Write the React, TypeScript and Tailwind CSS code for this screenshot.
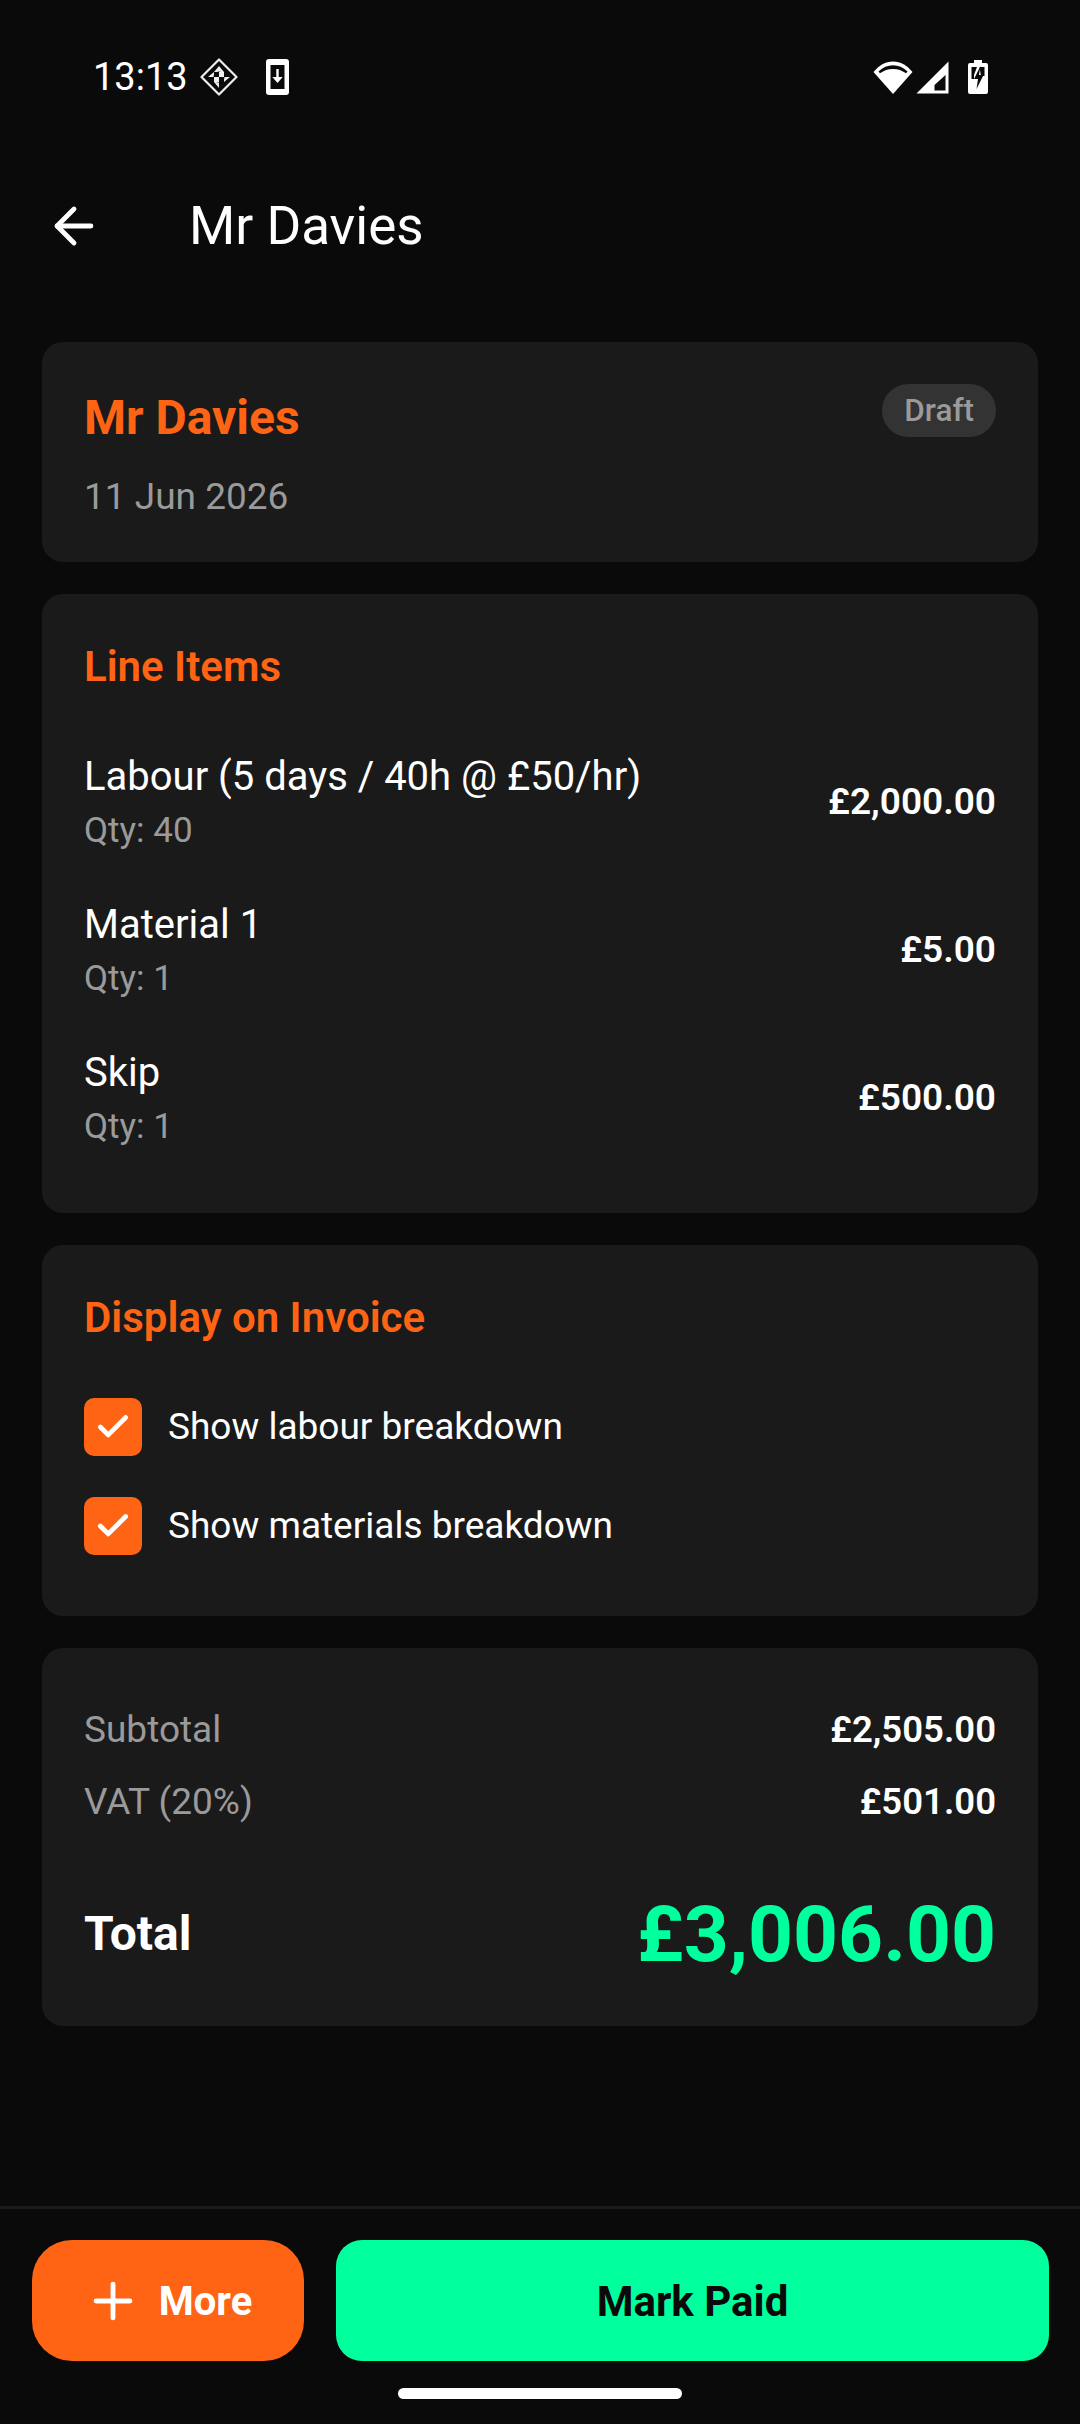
import { ArrowLeft, Check, Plus } from 'lucide-react';

const items = [
  { name: 'Labour (5 days / 40h @ £50/hr)', qty: 'Qty: 40', price: '£2,000.00' },
  { name: 'Material 1', qty: 'Qty: 1', price: '£5.00' },
  { name: 'Skip', qty: 'Qty: 1', price: '£500.00' },
];

function StatusBar() {
  return (
    <div className="h-[126px] flex items-start justify-between pl-[93px] pr-[92px] pt-[58px]">
      <div className="flex items-center">
        <span className="text-[38px] leading-[38px] text-white font-normal">13:13</span>
        <svg width="38" height="38" viewBox="0 0 38 38" className="ml-[12px]" fill="none">
          <path d="M19 1.500 36.500 19 19 36.500 1.500 19Z" stroke="#eee" strokeWidth="2.200" strokeLinejoin="round" />
          <path d="M19 8 24 14H14ZM8 19l6-5v5ZM30 19l-6 5v-5ZM19 30l-5-6h5ZM19 8v6M24 14l6 5" fill="#eee" />
          <circle cx="19" cy="19" r="5.500" fill="#0a0a0a" />
          <path d="M19 14h5v5h-5ZM14 19h5v5h-5Z" fill="#eee" />
        </svg>
        <svg width="23" height="36" viewBox="0 0 23 36" className="ml-[28px]">
          <rect width="23" height="36" rx="3" fill="#fff" />
          <rect x="4.500" y="6" width="14" height="24" fill="#0a0a0a" />
          <path d="M10.300 10h2.400v8h4l-5.200 6-5.200-6h4Z" fill="#fff" />
        </svg>
      </div>
      <div className="flex items-start pt-[3px]">
        <svg width="40" height="33" viewBox="0 0 40 33">
          <path d="M20 33 .5 11C6 4.500 12.500 .5 20 .5S34 4.500 39.500 11Z" fill="#fff" />
          <path d="M5.500 10.500C10 6.500 14.500 4.300 20 4.300S30 6.500 34.500 10.500L33 12.200C29 9.500 25 8 20 8S11 9.500 7 12.200Z" fill="#0a0a0a" />
        </svg>
        <svg width="33" height="33" viewBox="0 0 33 33" className="ml-[3px]">
          <path d="M32.500 .5V32.500H.5ZM29.500 14 18.500 24V29.500H29.500Z" fill="#fff" fillRule="evenodd" />
        </svg>
        <svg width="20" height="34" viewBox="0 0 20 34" className="ml-[19px] -mt-[1px]">
          <path d="M6 0h8v3h4a2 2 0 0 1 2 2v27a2 2 0 0 1-2 2H2a2 2 0 0 1-2-2V5a2 2 0 0 1 2-2h4Z" fill="#fff" />
          <path d="M3.500 7H9L6 15V19H3.500ZM11.500 7h5V16H13Z" fill="#0a0a0a" />
          <path d="M12.500 6 6 19h4l-1.500 10L15.500 15H11Z" fill="#0a0a0a" />
        </svg>
      </div>
    </div>
  );
}

function Card({ children, className }: { children: React.ReactNode; className: string }) {
  return <div className={`bg-[#1a1a1a] rounded-[21px] px-[42px] ${className}`}>{children}</div>;
}

function CheckRow({ label }: { label: string }) {
  return (
    <div className="flex items-center h-[58px]">
      <div className="w-[58px] h-[58px] rounded-[10px] bg-[#ff6314] flex items-center justify-center">
        <Check size={38} color="#fff" strokeWidth={3} />
      </div>
      <span className="ml-[26px] text-[37px] text-white leading-[58px]">{label}</span>
    </div>
  );
}

export default function App() {
  return (
    <div
      className="w-[1080px] h-[2424px] bg-[#0a0a0a] flex flex-col overflow-hidden"
      style={{ fontFamily: 'Roboto, sans-serif' }}
    >
      <StatusBar />
      <div className="h-[100px] mt-[50px] flex items-center">
        <ArrowLeft size={58} color="#fff" strokeWidth={2} className="ml-[45px]" />
        <h1 className="ml-[86px] text-[53px] leading-[72px] text-white font-normal">Mr Davies</h1>
      </div>

      <div className="flex-1 flex flex-col gap-[32px] px-[42px] pt-[66px]">
        <Card className="h-[220px] pt-[46px]">
          <div className="flex justify-between items-start">
            <div>
              <div className="text-[48px] leading-[60px] font-bold text-[#ff6314]">Mr Davies</div>
              <div className="mt-[27px] text-[37px] leading-[44px] text-[#9a9a9a]">11 Jun 2026</div>
            </div>
            <span className="-mt-[4px] h-[53px] px-[22px] rounded-full bg-[#333333] text-[31.500px] leading-[54px] font-medium text-[#9a9a9a]">
              Draft
            </span>
          </div>
        </Card>

        <Card className="h-[619px] pt-[48px]">
          <div className="text-[42px] leading-[50px] font-semibold text-[#ff6314]">Line Items</div>
          <div className="mt-[58px] flex flex-col gap-[42px]">
            {items.map(item => (
              <div key={item.name} className="flex items-center justify-between h-[106px]">
                <div>
                  <div className="text-[40px] leading-[52px] text-white">{item.name}</div>
                  <div className="mt-[3px] text-[35px] leading-[50px] text-[#9a9a9a]">{item.qty}</div>
                </div>
                <div className="text-[37px] leading-[48px] font-semibold text-white mb-[3px]">{item.price}</div>
              </div>
            ))}
          </div>
        </Card>

        <Card className="h-[371px] pt-[48px]">
          <div className="text-[42px] leading-[50px] font-semibold text-[#ff6314]">Display on Invoice</div>
          <div className="mt-[55px] flex flex-col gap-[41px]">
            <CheckRow label="Show labour breakdown" />
            <CheckRow label="Show materials breakdown" />
          </div>
        </Card>

        <Card className="h-[378px] pt-[57px]">
          <div className="flex justify-between items-center h-[50px]">
            <span className="text-[37px] text-[#9a9a9a]">Subtotal</span>
            <span className="text-[36.500px] font-semibold text-white">£2,505.00</span>
          </div>
          <div className="mt-[22px] flex justify-between items-center h-[50px]">
            <span className="text-[37px] text-[#9a9a9a]">VAT (20%)</span>
            <span className="text-[36.500px] font-semibold text-white">£501.00</span>
          </div>
          <div className="mt-[60px] flex justify-between items-center h-[94px]">
            <span className="text-[48px] leading-[92px] font-bold text-white">Total</span>
            <span className="text-[78.500px] leading-[94px] font-bold text-[#00ff9d]">£3,006.00</span>
          </div>
        </Card>
      </div>

      <div className="h-[218px] border-t-[3px] border-[#1a1a1a] relative">
        <div className="flex gap-[32px] pl-[32px] pr-[31px] pt-[31px]">
          <button className="w-[272px] h-[121px] rounded-[40px] bg-[#ff6314] flex items-center justify-center text-white text-[40px] font-bold">
            <Plus size={58} color="#fff" strokeWidth={2} />
            <span className="ml-[17px] leading-[50px] mt-[2px]">More</span>
          </button>
          <button className="flex-1 h-[121px] rounded-[26px] bg-[#00ff9d] flex items-center justify-center text-[#0a0a0a] text-[42px] font-bold">
            <span className="leading-[50px] mt-[2px]">Mark Paid</span>
          </button>
        </div>
        <div className="absolute left-[398px] bottom-[25px] w-[284px] h-[11px] rounded-full bg-white" />
      </div>
    </div>
  );
}
